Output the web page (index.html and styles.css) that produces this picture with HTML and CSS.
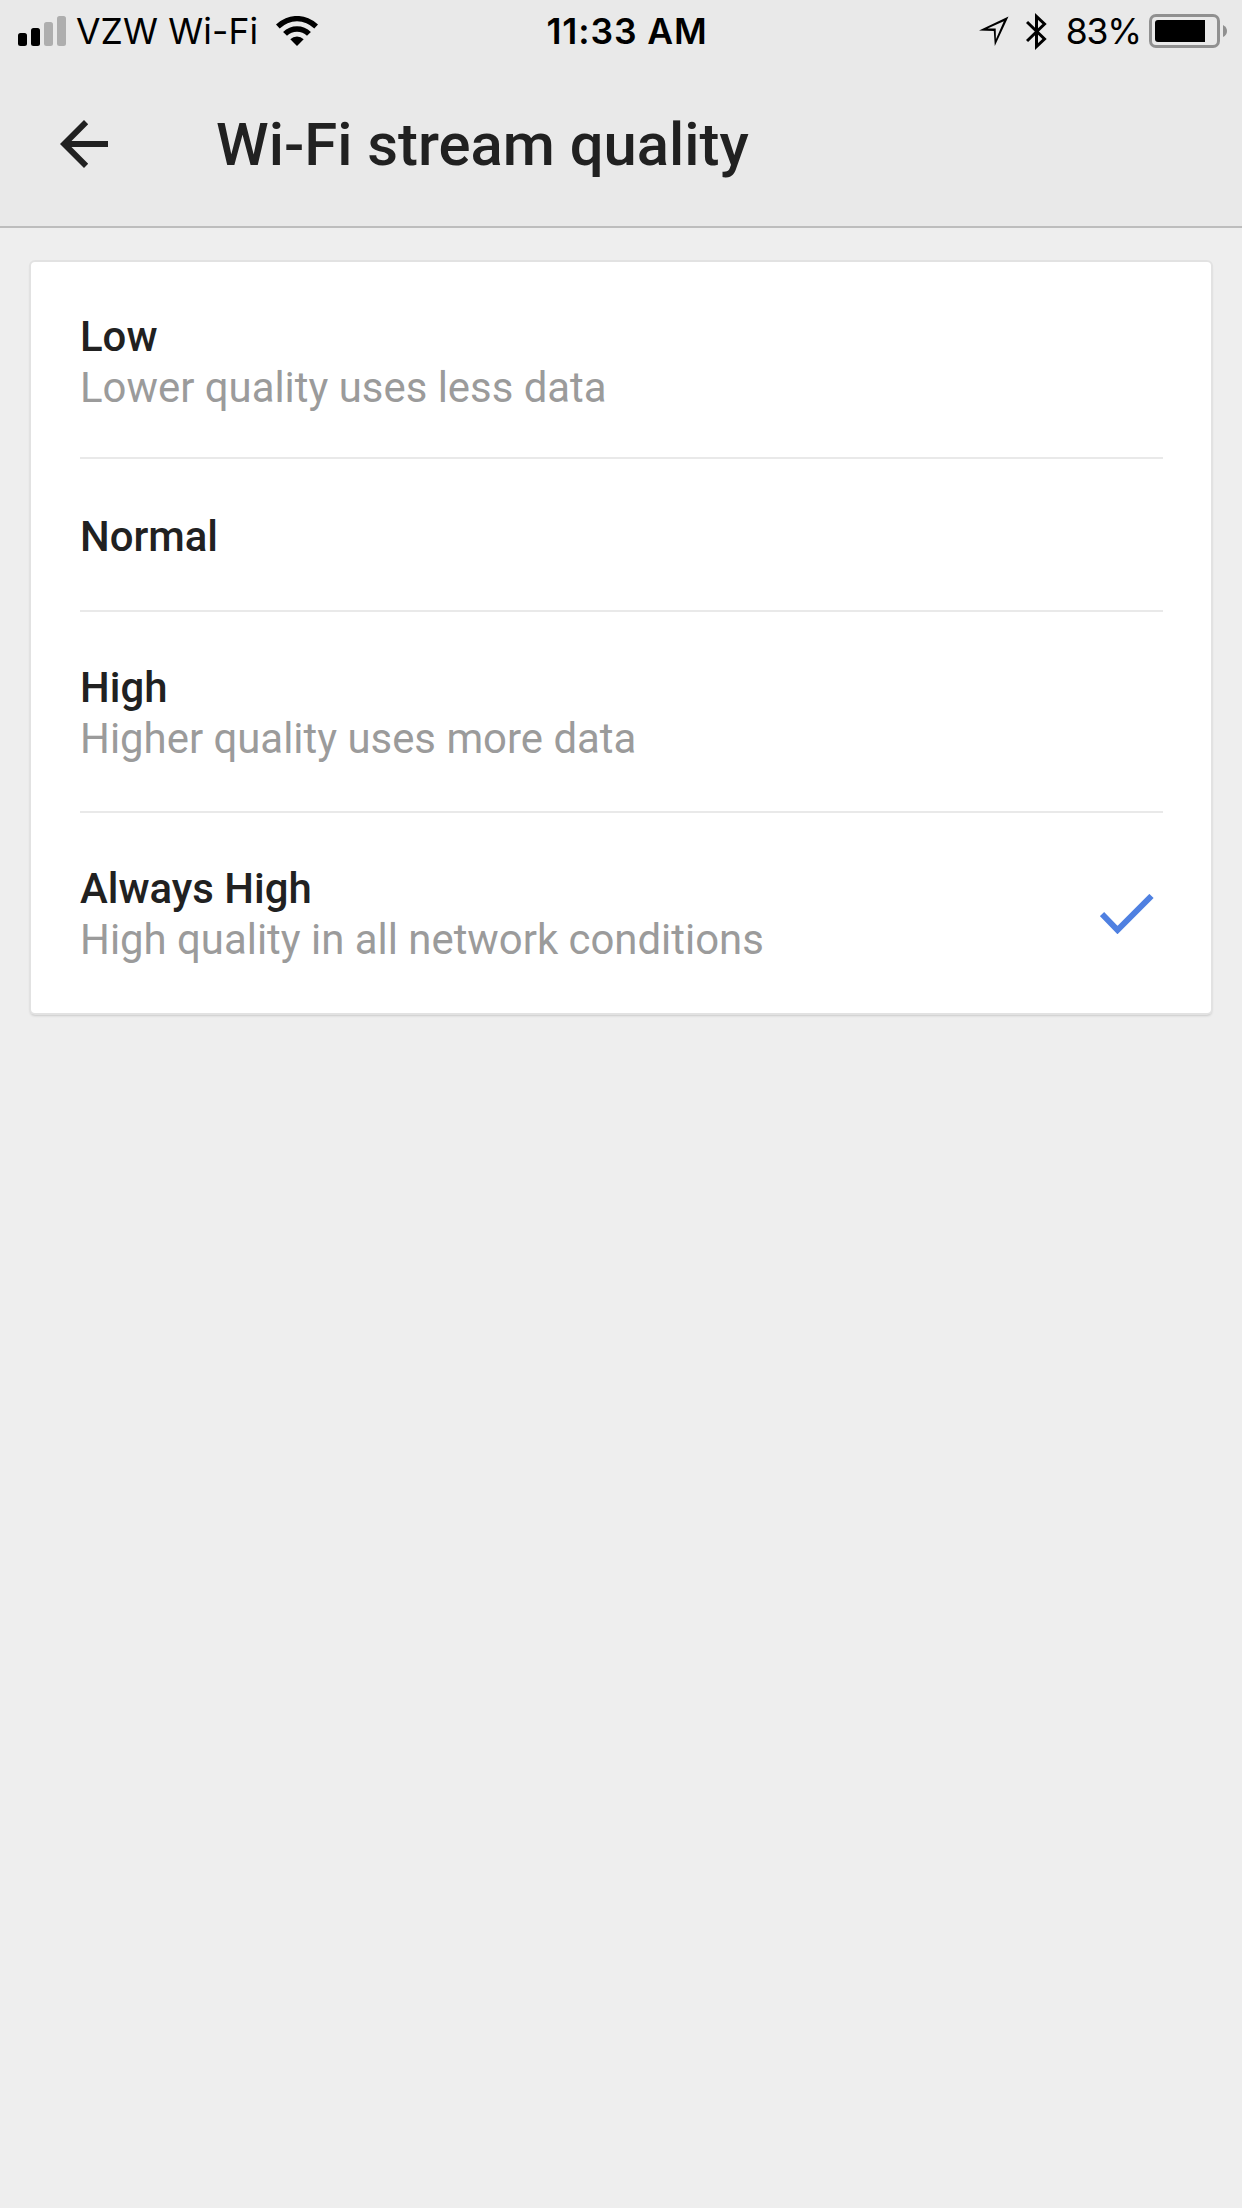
FILE: index.html
```html
<!DOCTYPE html>
<html lang="en">
<head>
  <meta charset="UTF-8" />
  <meta name="viewport" content="width=device-width, initial-scale=1.0"/>
  <title>Wi-Fi stream quality</title>
  <link rel="stylesheet" href="styles.css">
</head>
<body>

  <header class="header">
    <div class="status-bar">
      <div class="status-left">
        <svg class="signal" width="48" height="30" viewBox="0 0 48 30">
          <rect x="0" y="17" width="9" height="13" rx="2.5"/>
          <rect x="13" y="12" width="9" height="18" rx="2.5"/>
          <rect class="dim" x="26" y="6" width="9" height="24" rx="2.5"/>
          <rect class="dim" x="39" y="0" width="9" height="30" rx="2.5"/>
        </svg>
        <span class="carrier">VZW Wi-Fi</span>
        <svg class="wifi" width="42" height="30" viewBox="0 0 42 30">
          <path d="M0 8.5 A30 30 0 0 1 42 8.5 L38.3 12.4 A24.6 24.6 0 0 0 3.7 12.4 Z"/>
          <path d="M7.1 15.9 A20 20 0 0 1 34.9 15.9 L31 19.8 A14.4 14.4 0 0 0 11 19.8 Z"/>
          <path d="M14.3 23.3 A9.6 9.6 0 0 1 27.7 23.3 L21 30 Z"/>
        </svg>
      </div>
      <div class="time">11:33 AM</div>
      <div class="status-right">
        <svg class="location" width="30" height="30" viewBox="0 0 30 30">
          <path fill-rule="evenodd" d="M29.5 0.5 L0 14.6 L14.8 15 L15.8 30 Z M24.8 5.3 L16.9 23.3 L16.7 12.6 L8.6 12.4 Z"/>
        </svg>
        <svg class="bluetooth" width="21" height="37" viewBox="0 0 21 37">
          <path d="M1 9 L18.5 26 L10.5 33.5 L10.5 3.5 L18.5 11 L1 28"/>
        </svg>
        <span class="percent">83%</span>
        <svg class="battery" width="79" height="34" viewBox="0 0 79 34">
          <rect class="shell" x="1.5" y="1.5" width="68" height="31" rx="5.5"/>
          <path d="M9 6 H56 V28 H9 Q6 28 6 25 V9 Q6 6 9 6 Z"/>
          <path class="cap" d="M74 11 Q78 13 78 17 Q78 21 74 23 Z"/>
        </svg>
      </div>
    </div>

    <div class="toolbar">
      <svg class="back" width="48" height="48" viewBox="0 0 48 48">
        <path d="M48 21 V27 H11.5 L28.2 43.8 L24 48 L0 24 L24 0 L28.2 4.2 L11.5 21 Z"/>
      </svg>
      <h1>Wi-Fi stream quality</h1>
    </div>
  </header>

  <main class="card">
    <div class="option first">
      <div>
        <div class="name">Low</div>
        <div class="detail">Lower quality uses less data</div>
      </div>
    </div>
    <div class="option short">
      <div class="name">Normal</div>
    </div>
    <div class="option">
      <div>
        <div class="name">High</div>
        <div class="detail">Higher quality uses more data</div>
      </div>
    </div>
    <div class="option">
      <div>
        <div class="name">Always High</div>
        <div class="detail">High quality in all network conditions</div>
      </div>
      <svg class="check" width="54" height="40" viewBox="0 0 54 40">
        <path d="M2 20 L17.5 36 L51.5 2"/>
      </svg>
    </div>
  </main>

</body>
</html>
```
FILE: styles.css
```css
* {
  box-sizing: border-box;
}

body {
  margin: 0;
  min-height: 100vh;
  font-family: Roboto, sans-serif;
  background: #eeeeee;
  color: #212121;
}

svg {
  display: block;
  flex-shrink: 0;
}

.header {
  height: 228px;
  background: #e9e9e9;
  border-bottom: 2px solid #bdbdbd;
}

/* Status bar */
.status-bar {
  height: 60px;
  padding: 0 14px 0 18px;
  display: grid;
  grid-template-columns: 1fr auto 1fr;
  align-items: center;
  font-family: Inter, sans-serif;
  font-size: 35.5px;
  line-height: 60px;
  color: #000;
}

.status-left, .status-right {
  display: flex;
  align-items: center;
}

.status-right {
  justify-content: flex-end;
}

.signal .dim {
  fill: #aeaeae;
}

.carrier {
  padding-top: 2px;
  margin-left: 10px;
  letter-spacing: 0.1px;
}

.wifi {
  margin-left: 18px;
}

.time {
  padding: 2px 0 0 8px;
  font-weight: 600;
  letter-spacing: 0.9px;
}

.location {
  margin-right: 17px;
}

.bluetooth path {
  fill: none;
  stroke: #000;
  stroke-width: 3;
}

.percent {
  padding-top: 2px;
  margin: 0 8px 0 19px;
  letter-spacing: -1.2px;
}

.battery .shell {
  fill: none;
  stroke: #909090;
  stroke-width: 3;
}

.battery .cap {
  fill: #909090;
}

/* Title row */
.toolbar {
  height: 168px;
  padding: 0 60px;
  display: flex;
  align-items: center;
}

.back {
  fill: #212121;
}

h1 {
  margin: 0 0 0 108px;
  padding-top: 2px;
  font-size: 59.8px;
  font-weight: 500;
  line-height: 72px;
}

/* Options */
.card {
  margin: 34px 31px 0;
  padding: 0 48px 0 49px;
  background: #fff;
  border-radius: 4px;
  box-shadow: 0 0 0 2px #e2e2e2, 0 2px 3px rgba(0, 0, 0, 0.3);
}

.option {
  height: 201px;
  padding-top: 2px;
  display: flex;
  align-items: center;
  justify-content: space-between;
  border-bottom: 2px solid #e9e9e9;
}

.option.first {
  height: 197px;
  padding-top: 4px;
}

.option.short {
  height: 153px;
  padding-top: 4px;
}

.option:last-child {
  height: 200px;
  padding-top: 1px;
  border-bottom: none;
}

.name, .detail {
  font-size: 41.9px;
  line-height: 51px;
}

.name {
  font-weight: 500;
}

.detail {
  color: #9b9b9b;
}

.check {
  margin-right: 9px;
}

.check path {
  fill: none;
  stroke: #4f80e1;
  stroke-width: 6;
}
```
